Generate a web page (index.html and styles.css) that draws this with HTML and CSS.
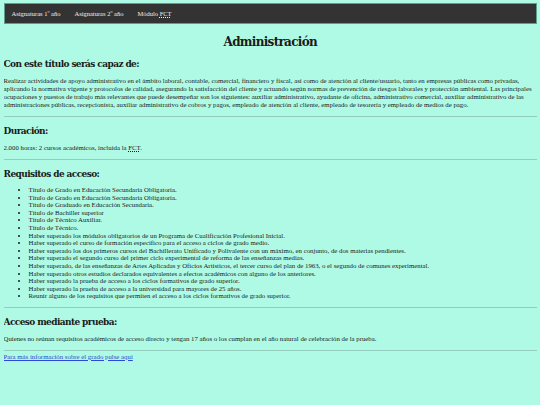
FILE: index.html
```html
<!DOCTYPE html>
<html lang="es">
<head>
    <meta charset="UTF-8" />
    <meta name="viewport" content="width=device-width, initial-scale=1" />
    <title>Administración</title>
    <link rel="stylesheet" href="styles.css">
</head>
<body>

    <nav class="menu">
        <ul>
            <li><a href="#">Asignaturas 1º año</a></li>
            <li><a href="#">Asignaturas 2º año</a></li>
            <li><a href="#">Módulo <abbr title="Formación en Centros de Trabajo">FCT</abbr></a></li>
        </ul>
    </nav>

    <h1>Administración</h1>

    <section>
        <h2>Con este título serás capaz de:</h2>
        <p class="intro">Realizar actividades de apoyo administrativo en el ámbito laboral, contable, comercial, financiero y fiscal, así como de atención al cliente/usuario, tanto en empresas públicas como privadas, aplicando la normativa vigente y protocolos de calidad, asegurando la satisfacción del cliente y actuando según normas de prevención de riesgos laborales y protección ambiental. Las principales ocupaciones y puestos de trabajo más relevantes que puede desempeñar son los siguientes: auxiliar administrativo, ayudante de oficina, administrativo comercial, auxiliar administrativo de las administraciones públicas, recepcionista, auxiliar administrativo de cobros y pagos, empleado de atención al cliente, empleado de tesorería y empleado de medios de pago.</p>
    </section>

    <hr>

    <section>
        <h2>Duración:</h2>
        <p>2.000 horas: 2 cursos académicos, incluida la <abbr title="Formación en Centros de Trabajo">FCT</abbr>.</p>
    </section>

    <hr>

    <section>
        <h2>Requisitos de acceso:</h2>
        <ul class="requisitos">
            <li>Título de Grado en Educación Secundaria Obligatoria.</li>
            <li>Título de Grado en Educación Secundaria Obligatoria.</li>
            <li>Título de Graduado en Educación Secundaria.</li>
            <li>Título de Bachiller superior</li>
            <li>Título de Técnico Auxiliar.</li>
            <li>Título de Técnico.</li>
            <li>Haber superado los módulos obligatorios de un Programa de Cualificación Profesional Inicial.</li>
            <li>Haber superado el curso de formación específico para el acceso a ciclos de grado medio.</li>
            <li>Haber superado los dos primeros cursos del Bachillerato Unificado y Polivalente con un máximo, en conjunto, de dos materias pendientes.</li>
            <li>Haber superado el segundo curso del primer ciclo experimental de reforma de las enseñanzas medias.</li>
            <li>Haber superado, de las enseñanzas de Artes Aplicadas y Oficios Artísticos, el tercer curso del plan de 1963, o el segundo de comunes experimental.</li>
            <li>Haber superado otros estudios declarados equivalentes a efectos académicos con alguno de los anteriores.</li>
            <li>Haber superado la prueba de acceso a los ciclos formativos de grado superior.</li>
            <li>Haber superado la prueba de acceso a la universidad para mayores de 25 años.</li>
            <li>Reunir alguno de los requisitos que permiten el acceso a los ciclos formativos de grado superior.</li>
        </ul>
    </section>

    <hr>

    <section>
        <h2>Acceso mediante prueba:</h2>
        <p>Quienes no reúnan requisitos académicos de acceso directo y tengan 17 años o los cumplan en el año natural de celebración de la prueba.</p>
    </section>

    <hr class="ultimo">

    <p class="mas-info"><a href="#">Para más información sobre el grado pulse aquí</a></p>

</body>
</html>
```

FILE: styles.css
```css
body {
    font-family: "Liberation Serif", "Times New Roman", serif;
    font-size: 6.8px;
    line-height: 8px;
    background: #affae4;
    color: #1a1a1a;
    margin: 3px 3px 3px 3.5px;
}
.menu {
    background: #333;
    border: 1px solid #5f9e8c;
    height: 19px;
    display: flex;
    align-items: center;
}
.menu ul {
    list-style: none;
    margin: 0;
    padding: 0;
    display: flex;
}
.menu a {
    display: block;
    padding: 0 7px;
    color: #eee;
    text-decoration: none;
    font-size: 6.5px;
}
abbr {
    text-decoration: underline dotted;
}
/* titulos en serif negrita, algo apretada para acercarse a Times */
h1, h2 {
    font-family: "DejaVu Serif", serif;
    font-weight: bold;
}
h1 {
    text-align: center;
    font-size: 12px;
    letter-spacing: -0.7px;
    line-height: 16px;
    margin: 10px 0 6px;
}
h2 {
    font-size: 9px;
    letter-spacing: -0.6px;
    line-height: 12px;
    margin: 8px 0 6px;
}
p {
    margin: 7px 0;
}
p.intro {
    margin-bottom: 7px;
}
hr {
    border: 0;
    border-top: 1px solid #93cdbd;
    margin: 7px 0;
}
hr.ultimo {
    margin-bottom: 2px;
}
.requisitos {
    margin: 4px 0 7px;
    padding-left: 25px;
}
.requisitos li {
    line-height: 7.6px;
}
.mas-info {
    margin: 0;
}
.mas-info a {
    color: #2b4bd6;
    text-decoration: underline;
}
```
